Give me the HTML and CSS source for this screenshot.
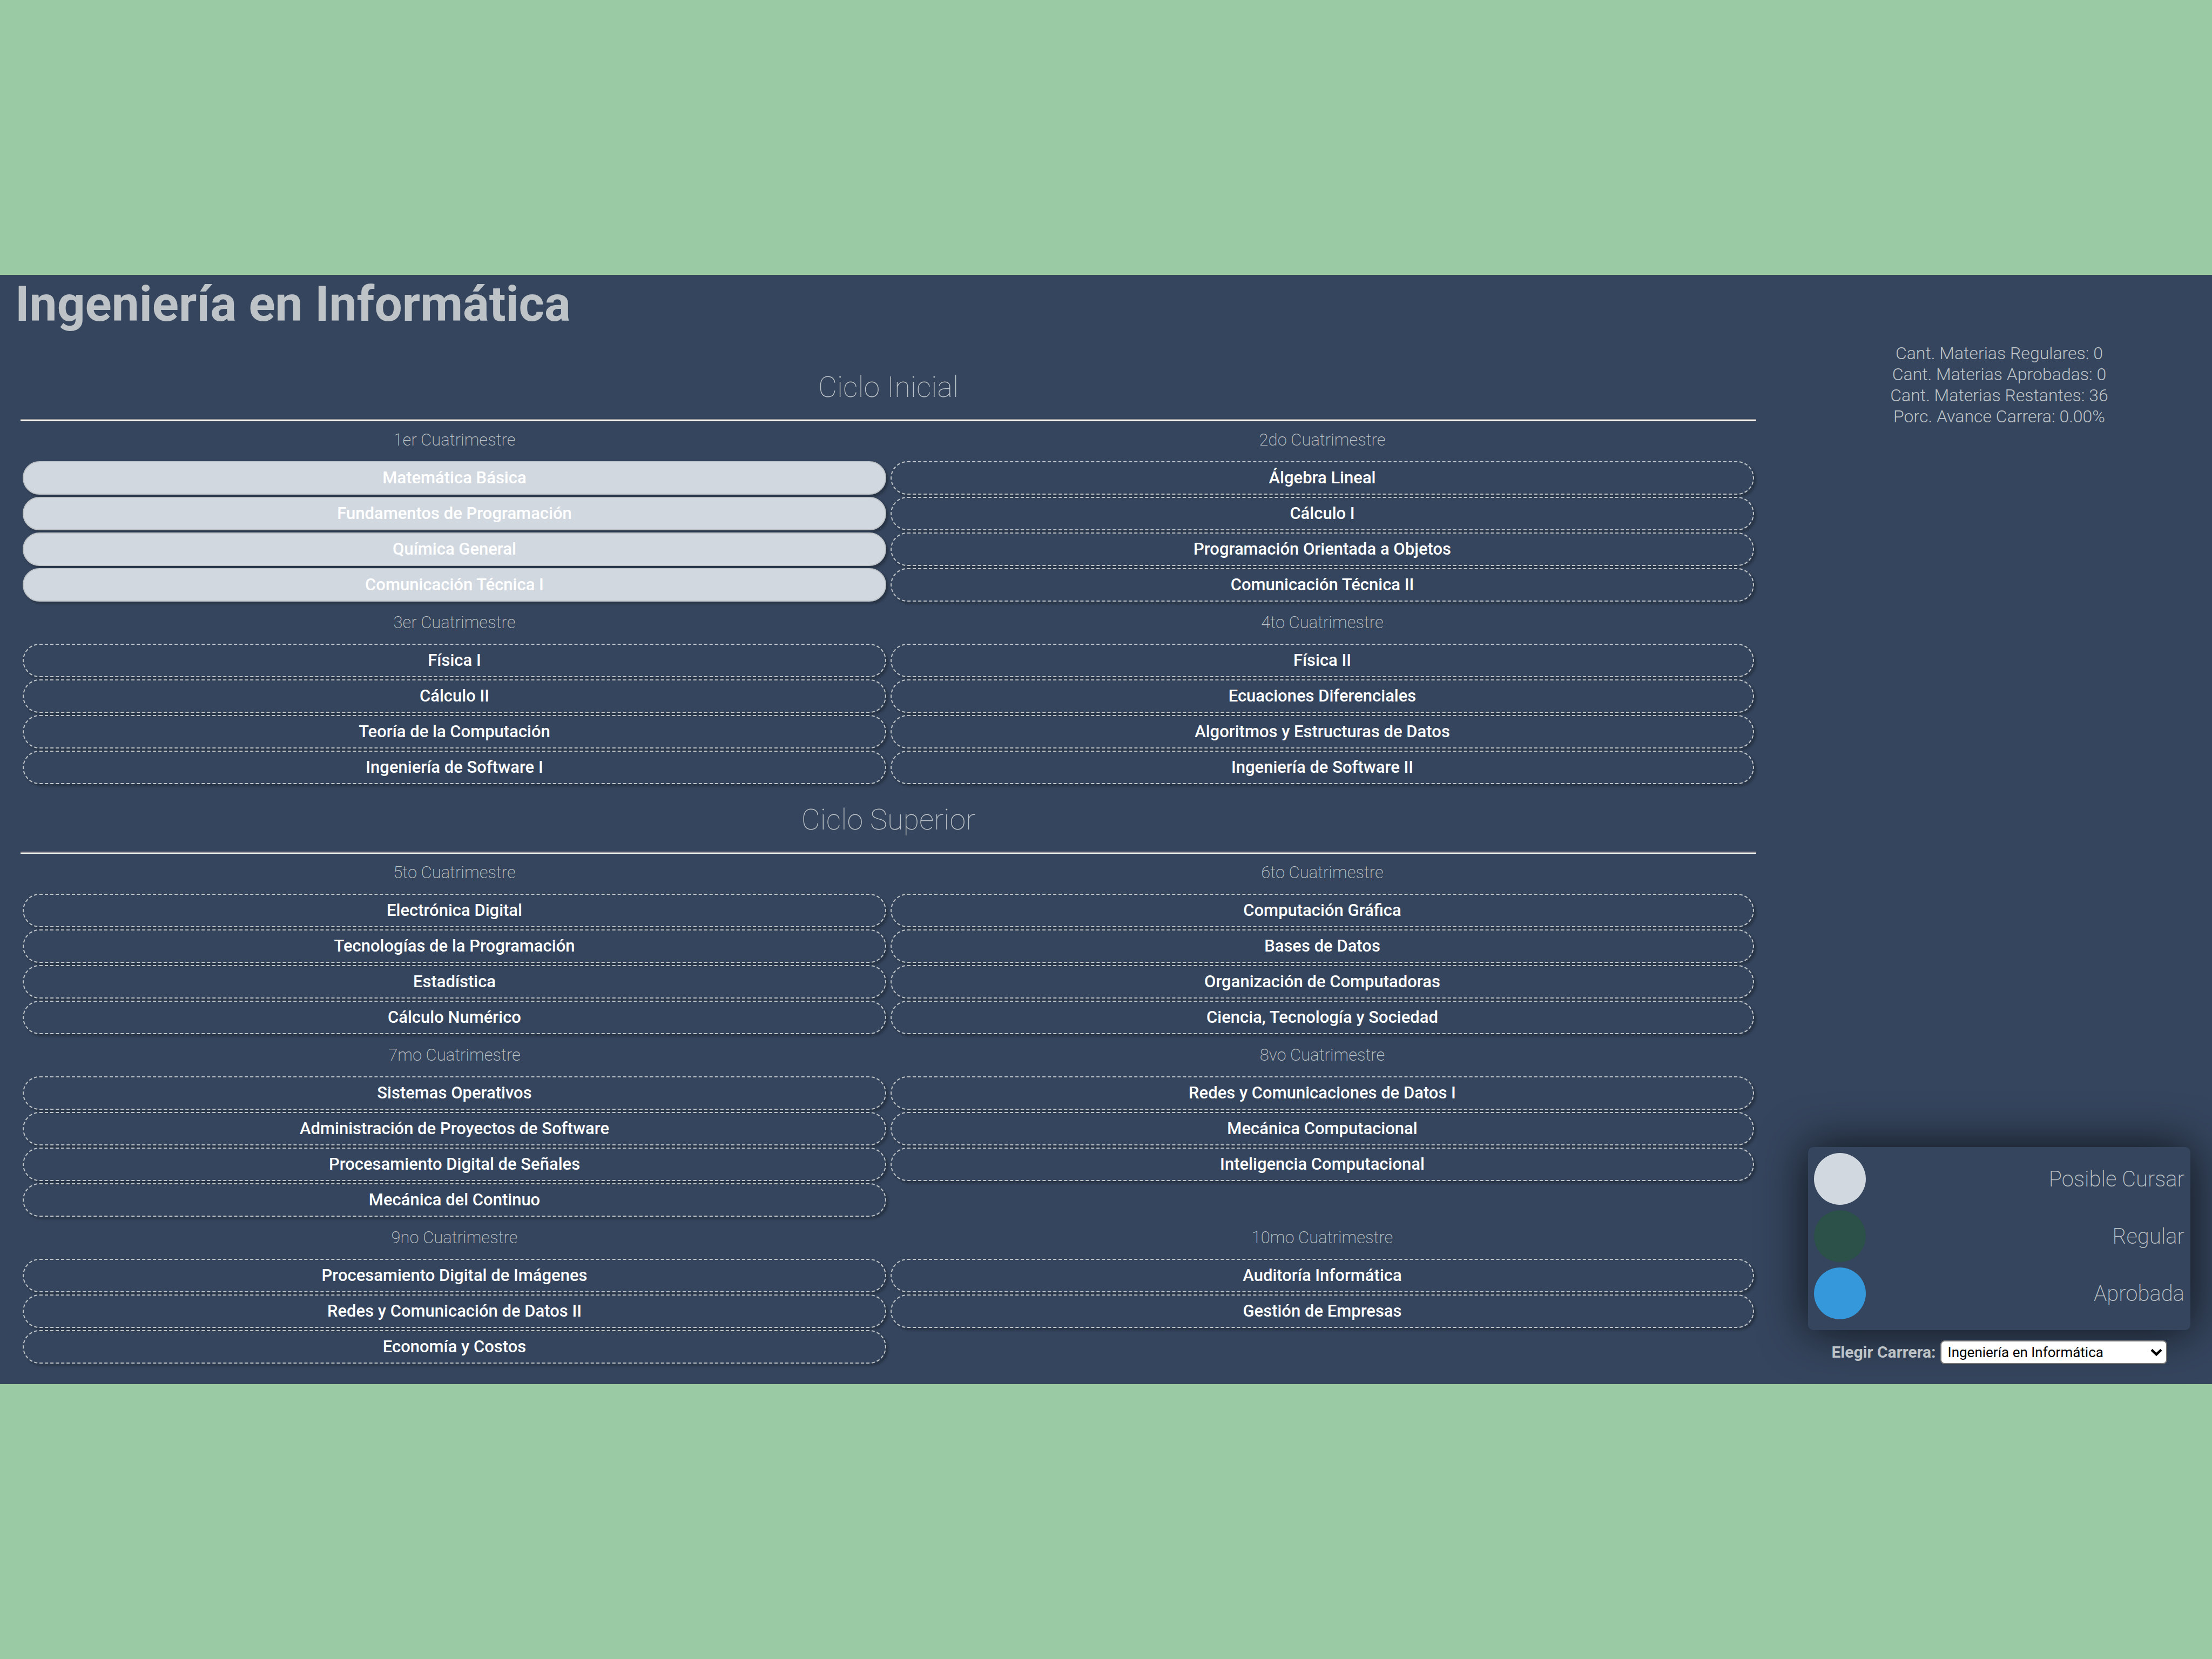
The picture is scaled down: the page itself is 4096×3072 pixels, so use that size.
FILE: index.html
```
<!DOCTYPE html>
<html lang="es">
<head>
<meta charset="utf-8">
<meta name="viewport" content="width=device-width, initial-scale=1">
<title>Ingeniería en Informática</title>
<link rel="stylesheet" href="styles.css">
</head>
<body>
<div class="panel">
  <h1 class="title">Ingeniería en Informática</h1>
  <div class="layout">
    <main class="plan">
      <section class="cycle">
        <h2 class="cycle-title">Ciclo Inicial</h2>
        <hr class="rule">
        <div class="terms">
          <section class="term">
            <h3 class="term-title">1er Cuatrimestre</h3>
            <ul class="courses">
              <li><button class="course course-open" type="button">Matemática Básica</button></li>
              <li><button class="course course-open" type="button">Fundamentos de Programación</button></li>
              <li><button class="course course-open" type="button">Química General</button></li>
              <li><button class="course course-open" type="button">Comunicación Técnica I</button></li>
            </ul>
          </section>
          <section class="term">
            <h3 class="term-title">2do Cuatrimestre</h3>
            <ul class="courses">
              <li><button class="course" type="button">Álgebra Lineal</button></li>
              <li><button class="course" type="button">Cálculo I</button></li>
              <li><button class="course" type="button">Programación Orientada a Objetos</button></li>
              <li><button class="course" type="button">Comunicación Técnica II</button></li>
            </ul>
          </section>
          <section class="term">
            <h3 class="term-title">3er Cuatrimestre</h3>
            <ul class="courses">
              <li><button class="course" type="button">Física I</button></li>
              <li><button class="course" type="button">Cálculo II</button></li>
              <li><button class="course" type="button">Teoría de la Computación</button></li>
              <li><button class="course" type="button">Ingeniería de Software I</button></li>
            </ul>
          </section>
          <section class="term">
            <h3 class="term-title">4to Cuatrimestre</h3>
            <ul class="courses">
              <li><button class="course" type="button">Física II</button></li>
              <li><button class="course" type="button">Ecuaciones Diferenciales</button></li>
              <li><button class="course" type="button">Algoritmos y Estructuras de Datos</button></li>
              <li><button class="course" type="button">Ingeniería de Software II</button></li>
            </ul>
          </section>
        </div>
      </section>
      <section class="cycle">
        <h2 class="cycle-title">Ciclo Superior</h2>
        <hr class="rule">
        <div class="terms">
          <section class="term">
            <h3 class="term-title">5to Cuatrimestre</h3>
            <ul class="courses">
              <li><button class="course" type="button">Electrónica Digital</button></li>
              <li><button class="course" type="button">Tecnologías de la Programación</button></li>
              <li><button class="course" type="button">Estadística</button></li>
              <li><button class="course" type="button">Cálculo Numérico</button></li>
            </ul>
          </section>
          <section class="term">
            <h3 class="term-title">6to Cuatrimestre</h3>
            <ul class="courses">
              <li><button class="course" type="button">Computación Gráfica</button></li>
              <li><button class="course" type="button">Bases de Datos</button></li>
              <li><button class="course" type="button">Organización de Computadoras</button></li>
              <li><button class="course" type="button">Ciencia, Tecnología y Sociedad</button></li>
            </ul>
          </section>
          <section class="term">
            <h3 class="term-title">7mo Cuatrimestre</h3>
            <ul class="courses">
              <li><button class="course" type="button">Sistemas Operativos</button></li>
              <li><button class="course" type="button">Administración de Proyectos de Software</button></li>
              <li><button class="course" type="button">Procesamiento Digital de Señales</button></li>
              <li><button class="course" type="button">Mecánica del Continuo</button></li>
            </ul>
          </section>
          <section class="term">
            <h3 class="term-title">8vo Cuatrimestre</h3>
            <ul class="courses">
              <li><button class="course" type="button">Redes y Comunicaciones de Datos I</button></li>
              <li><button class="course" type="button">Mecánica Computacional</button></li>
              <li><button class="course" type="button">Inteligencia Computacional</button></li>
            </ul>
          </section>
          <section class="term">
            <h3 class="term-title">9no Cuatrimestre</h3>
            <ul class="courses">
              <li><button class="course" type="button">Procesamiento Digital de Imágenes</button></li>
              <li><button class="course" type="button">Redes y Comunicación de Datos II</button></li>
              <li><button class="course" type="button">Economía y Costos</button></li>
            </ul>
          </section>
          <section class="term">
            <h3 class="term-title">10mo Cuatrimestre</h3>
            <ul class="courses">
              <li><button class="course" type="button">Auditoría Informática</button></li>
              <li><button class="course" type="button">Gestión de Empresas</button></li>
            </ul>
          </section>
        </div>
      </section>
    </main>
    <aside class="side">
      <div class="stats">
        <p>Cant. Materias Regulares: 0</p>
        <p>Cant. Materias Aprobadas: 0</p>
        <p>Cant. Materias Restantes: 36</p>
        <p>Porc. Avance Carrera: 0.00%</p>
      </div>
      <ul class="legend">
        <li class="legend-row"><span class="dot dot-open"></span><span>Posible Cursar</span></li>
        <li class="legend-row"><span class="dot dot-regular"></span><span>Regular</span></li>
        <li class="legend-row"><span class="dot dot-passed"></span><span>Aprobada</span></li>
      </ul>
      <div class="picker">
        <label class="picker-label" for="carrera">Elegir Carrera:</label>
        <div class="picker-field">
          <select class="picker-select" id="carrera">
            <option selected>Ingeniería en Informática</option>
          </select>
          <svg class="picker-arrow" viewBox="0 0 22 14" aria-hidden="true"><path d="M2 2.5l9 8.5 9-8.5" fill="none" stroke="#000" stroke-width="4.5"/></svg>
        </div>
      </div>
    </aside>
  </div>
</div>
</body>
</html>
```
FILE: styles.css
```
* {
  box-sizing: border-box;
}

body {
  margin: 0;
  min-height: 100vh;
  display: flex;
  flex-direction: column;
  justify-content: center;
  background: #9acaa4;
  color: #bdc3c7;
  font-family: Roboto, sans-serif;
}

h1,
h2,
h3,
p,
ul {
  margin: 0;
  padding: 0;
}

ul {
  list-style: none;
}

.panel {
  background: #35455d;
  padding-bottom: 37px;
}

.title {
  padding-left: 28px;
  font-size: 91px;
  font-weight: 700;
  line-height: 108px;
}

.layout {
  display: grid;
  grid-template-columns: minmax(0, 1fr) 708px;
  column-gap: 96px;
  padding: 0 40px 0 38px;
}

/* Study plan */

.plan {
  display: flex;
  flex-direction: column;
  gap: 34px;
  padding: 68px 0 1px;
}

.cycle-title {
  font-size: 54px;
  font-weight: 100;
  line-height: 64px;
  text-align: center;
}

.rule {
  margin: 27px 0 17px;
  border: 0;
  border-top: 2px solid #9a9a9a;
  border-bottom: 2px solid #eeeeee;
}

.terms {
  display: grid;
  grid-template-columns: 1fr 1fr;
  row-gap: 21px;
}

.term-title {
  margin-bottom: 21px;
  font-size: 31px;
  font-weight: 200;
  line-height: 36px;
  text-align: center;
}

.courses {
  display: flex;
  flex-direction: column;
  gap: 4px;
  padding: 0 4px;
}

.course {
  display: block;
  width: 100%;
  height: 62px;
  padding: 0;
  border: 2px dashed #bdc3c7;
  border-radius: 31px;
  background: transparent;
  box-shadow: 4px 4px 4px rgba(0, 0, 0, 0.25);
  color: #ffffff;
  font-family: inherit;
  font-size: 31px;
  font-weight: 500;
  line-height: 36px;
}

.course-open {
  border-style: solid;
  background: #d2d8e0;
}

/* Progress, legend and degree selector */

.side {
  display: flex;
  flex-direction: column;
  padding-top: 18px;
}

.stats {
  font-size: 32px;
  font-weight: 300;
  line-height: 39px;
  text-align: center;
}

.legend {
  display: flex;
  flex-direction: column;
  gap: 10px;
  margin-top: auto;
  padding: 11px 11px 20px;
  border-radius: 10px;
  box-shadow: 0 0 86px rgba(0, 0, 0, 0.75);
  font-size: 40px;
  font-weight: 200;
}

.legend-row {
  display: flex;
  align-items: center;
  justify-content: space-between;
}

.dot {
  width: 96px;
  height: 96px;
  border-radius: 50%;
}

.dot-open {
  background: #d2d8e0;
}

.dot-regular {
  background: #2b5149;
}

.dot-passed {
  background: #3598db;
}

.picker {
  display: flex;
  align-items: center;
  justify-content: center;
  gap: 8px;
  margin-top: 19px;
}

.picker-label {
  font-size: 30px;
  font-weight: 700;
  line-height: 44px;
}

.picker-field {
  position: relative;
  width: 420px;
}

.picker-select {
  display: block;
  appearance: none;
  width: 100%;
  height: 44px;
  padding: 0 48px 0 12px;
  border: 2px solid #767676;
  border-radius: 8px;
  background: #ffffff;
  color: #000000;
  font-family: inherit;
  font-size: 26px;
}

.picker-arrow {
  position: absolute;
  top: 15px;
  right: 9px;
  width: 22px;
  height: 14px;
  pointer-events: none;
}
```
